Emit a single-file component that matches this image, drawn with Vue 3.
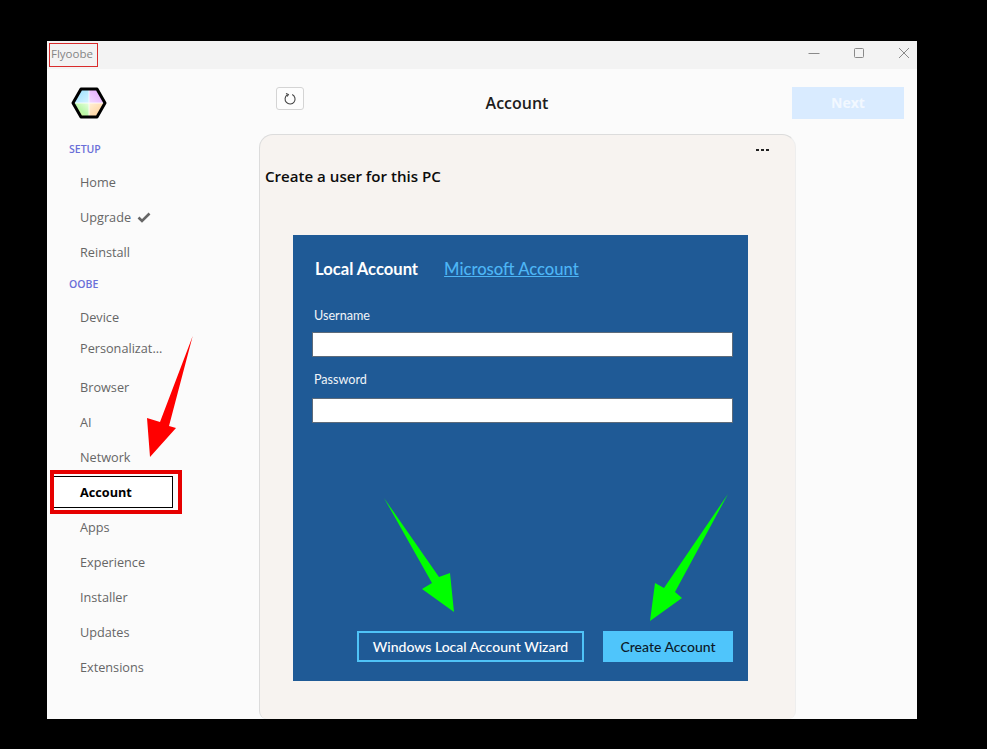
<script setup>
const setup = [{ label: 'Home' }, { label: 'Upgrade', check: true }, { label: 'Reinstall' }]
const oobe = [
  { label: 'Device' },
  { label: 'Personalizat...', raised: true },
  { label: 'Browser' },
  { label: 'AI' },
  { label: 'Network' },
  { label: 'Account', active: true },
  { label: 'Apps' },
  { label: 'Experience' },
  { label: 'Installer' },
  { label: 'Updates' },
  { label: 'Extensions' },
]
</script>

<template>
  <div class="page">
    <div class="window">
      <header class="titlebar">
        <span class="app-name">Flyoobe</span>
        <div class="controls">
          <svg width="12" height="12" viewBox="0 0 12 12"><path d="M0.5 6.5H11.5" stroke="#8a8a8a" fill="none" /></svg>
          <svg width="12" height="12" viewBox="0 0 12 12"><rect x="1.5" y="1.5" width="9" height="9" rx="1" stroke="#8a8a8a" fill="none" /></svg>
          <svg width="12" height="12" viewBox="0 0 12 12"><path d="M1 1L11 11M11 1L1 11" stroke="#8a8a8a" fill="none" /></svg>
        </div>
      </header>
      <div class="body">
        <aside class="sidebar">
          <div class="logo">
            <svg width="36" height="32" viewBox="0 0 36 32">
              <defs>
                <linearGradient id="q1" x1="0" y1="0" x2="1" y2="1"><stop offset="0" stop-color="#8fdcff" /><stop offset="1" stop-color="#d8f4ff" /></linearGradient>
                <linearGradient id="q2" x1="1" y1="0" x2="0" y2="1"><stop offset="0" stop-color="#e49cff" /><stop offset="1" stop-color="#f2dcff" /></linearGradient>
                <linearGradient id="q3" x1="0" y1="1" x2="1" y2="0"><stop offset="0" stop-color="#f4f58c" /><stop offset="0.5" stop-color="#b9f7a8" /><stop offset="1" stop-color="#e8ffe0" /></linearGradient>
                <linearGradient id="q4" x1="1" y1="1" x2="0" y2="0"><stop offset="0" stop-color="#ffc98a" /><stop offset="1" stop-color="#fff0d8" /></linearGradient>
              </defs>
              <path d="M18 16H2L10 2H18Z" fill="url(#q1)" />
              <path d="M18 16H34L26 2H18Z" fill="url(#q2)" />
              <path d="M18 16H2L10 30H18Z" fill="url(#q3)" />
              <path d="M18 16H34L26 30H18Z" fill="url(#q4)" />
              <path d="M18 2V30M2 16H34" stroke="#fff" stroke-width="1" opacity="0.8" />
              <path d="M10 2H26L34 16L26 30H10L2 16Z" fill="none" stroke="#000" stroke-width="3" stroke-linejoin="round" />
            </svg>
          </div>
          <div class="section setup-label">SETUP</div>
          <nav class="group first">
            <div v-for="item in setup" :key="item.label" class="item">
              <span class="label">{{ item.label }}</span>
              <svg v-if="item.check" class="check" width="14" height="11" viewBox="0 0 14 11">
                <path d="M1.5 5.5L5 9L12.5 1.5" fill="none" stroke="#666" stroke-width="2.6" />
              </svg>
            </div>
          </nav>
          <div class="section">OOBE</div>
          <nav class="group">
            <div
              v-for="item in oobe"
              :key="item.label"
              class="item"
              :class="{ active: item.active, raised: item.raised }"
            >
              <span class="label">{{ item.label }}</span>
            </div>
          </nav>
        </aside>
        <main class="main">
          <div class="toolbar">
            <button class="refresh" type="button" aria-label="Refresh">
              <svg width="14" height="14" viewBox="0 0 14 14">
                <path d="M4.4 2.8A5 5 0 1 0 9.2 2.5" fill="none" stroke="#444" stroke-width="1.1" />
                <path d="M3 1.4L5.4 2.4L4.2 4.6" fill="none" stroke="#444" stroke-width="1.1" />
              </svg>
            </button>
            <h1 class="title">Account</h1>
            <button class="next" type="button">Next</button>
          </div>
          <section class="card">
            <div class="dots">
              <i></i><i></i><i></i>
            </div>
            <h2 class="heading">Create a user for this PC</h2>
            <div class="panel">
              <div class="tabs">
                <span class="tab-local">Local Account</span>
                <a class="tab-ms">Microsoft Account</a>
              </div>
              <label class="field-label first-label">Username</label>
              <div class="input"></div>
              <label class="field-label second-label">Password</label>
              <div class="input"></div>
              <div class="actions">
                <button class="btn outline" type="button">Windows Local Account Wizard</button>
                <button class="btn solid" type="button">Create Account</button>
              </div>
            </div>
          </section>
        </main>
      </div>
    </div>
    <svg class="annotations" width="987" height="749" viewBox="0 0 987 749">
      <rect x="49.5" y="43.5" width="48" height="23" fill="none" stroke="#d92b2b" stroke-width="1" />
      <rect x="52" y="472" width="128" height="40" fill="none" stroke="#e60000" stroke-width="4" />
      <polygon points="192.7,336 169,426 176,428 150,457 147,418 160,422" fill="#ff0000" />
      <polygon points="384,498 439,577 450,573 454,612 422,589 432,583" fill="#00ff00" />
      <polygon points="728,494 675,592 682,598 650,621 655,583 664,588" fill="#00ff00" />
    </svg>
  </div>
</template>

<style>
html, body { margin: 0; background: #000; }
</style>

<style scoped>
.page {
  position: relative;
  box-sizing: border-box;
  width: 987px;
  height: 749px;
  padding: 41px 70px 30px 47px;
  background: #000;
  overflow: hidden;
  font-family: "Open Sans", "Noto Sans", sans-serif;
}
.window {
  height: 100%;
  display: flex;
  flex-direction: column;
  background: #fbfbfb;
}
.titlebar {
  height: 28px;
  flex: none;
  display: flex;
  justify-content: space-between;
  background: #f3f3f3;
}
.app-name {
  padding: 5px 0 0 4px;
  font-size: 11.5px;
  line-height: 15px;
  color: #858585;
}
.controls {
  display: flex;
  gap: 33px;
  padding: 6px 7px 0 0;
  align-items: flex-start;
}
.body {
  flex: 1;
  min-height: 0;
  display: flex;
}
.sidebar {
  width: 212px;
  flex: none;
}
.logo {
  height: 65px;
  box-sizing: border-box;
  padding: 18px 0 0 24px;
}
.logo svg { display: block; }
.section {
  height: 28px;
  line-height: 28px;
  padding-left: 22px;
  font-size: 10.5px;
  font-weight: 600;
  color: #6a6fd8;
}
.setup-label { line-height: 30px; }
.group { margin-top: 2px; }
.group.first { margin-top: 3px; }
.item {
  box-sizing: border-box;
  height: 35px;
  display: flex;
  align-items: center;
  gap: 6px;
  padding: 0 0 2px 33px;
  font-size: 12.7px;
  color: #666;
}
.label { line-height: 18px; white-space: nowrap; }
.check { margin-top: 1px; }
.raised { padding-bottom: 10px; }
.active {
  width: 120px;
  height: 32px;
  margin: 1px 0 2px 6px;
  padding: 0 0 0 26px;
  border: 1px solid #000;
  background: #fff;
  color: #000;
  font-weight: 700;
}
.main {
  flex: 1;
  min-width: 0;
  display: flex;
  flex-direction: column;
}
.toolbar {
  height: 65px;
  flex: none;
  box-sizing: border-box;
  display: flex;
  align-items: flex-start;
  padding: 18px 13px 0 17px;
}
.refresh {
  width: 28px;
  height: 23px;
  padding: 0;
  display: flex;
  align-items: center;
  justify-content: center;
  background: #fdfdfd;
  border: 1px solid #d4d4d4;
  border-radius: 3px;
}
.title {
  flex: 1;
  margin: 0;
  padding: 6px 62px 0 0;
  text-align: center;
  font-size: 16px;
  line-height: 20px;
  font-weight: 600;
  color: #1c1c1c;
}
.next {
  width: 112px;
  height: 32px;
  padding: 0 0 2px;
  border: 0;
  background: #d9ebff;
  color: #f2f8ff;
  font-family: inherit;
  font-size: 14px;
  font-weight: 700;
}
.card {
  box-sizing: border-box;
  width: 537px;
  height: 585px;
  position: relative;
  border: 1px solid #dcdcdc;
  border-right-color: #eeeeee;
  border-bottom: 0;
  border-radius: 14px 14px 8px 8px;
  background: #f7f3f0;
}
.dots {
  position: absolute;
  top: 14px;
  right: 26px;
  display: flex;
  gap: 2px;
}
.dots i {
  width: 3px;
  height: 2px;
  background: #222;
}
.heading {
  margin: 0;
  padding: 31px 0 0 5px;
  font-size: 15.1px;
  line-height: 21px;
  font-weight: 600;
  color: #0c0c0c;
}
.panel {
  box-sizing: border-box;
  width: 455px;
  height: 446px;
  margin: 48px 0 0 33px;
  padding: 0 15px 19px 19px;
  display: flex;
  flex-direction: column;
  background: #1f5a96;
  font-family: Lato, "Open Sans", sans-serif;
}
.tabs {
  display: flex;
  gap: 26px;
  padding: 24px 0 0 3px;
  font-size: 16.6px;
  line-height: 20px;
}
.tab-local { color: #fff; font-weight: 700; }
.tab-ms {
  color: #4db5f5;
  font-weight: 500;
  text-decoration: underline;
}
.field-label {
  display: block;
  padding-left: 2px;
  font-size: 12.6px;
  line-height: 16px;
  font-weight: 400;
  color: #f0f4f8;
}
.first-label { margin: 29px 0 -1px; }
.second-label { margin: 15px 0 1px; }
.input {
  box-sizing: border-box;
  height: 25px;
  margin-top: 9px;
  background: #fff;
  border: 1px solid #5d6b7a;
}
.actions {
  margin-top: auto;
  display: flex;
  justify-content: flex-end;
  gap: 19px;
}
.btn {
  height: 31px;
  padding: 0;
  font-family: inherit;
  font-size: 14px;
  font-weight: 500;
}
.outline {
  width: 227px;
  background: transparent;
  border: 2px solid #4fc3f7;
  color: #fff;
}
.solid {
  width: 130px;
  background: #4fc5fb;
  border: 0;
  color: #0b1a2a;
}
.annotations {
  position: absolute;
  left: 0;
  top: 0;
  pointer-events: none;
}
</style>
